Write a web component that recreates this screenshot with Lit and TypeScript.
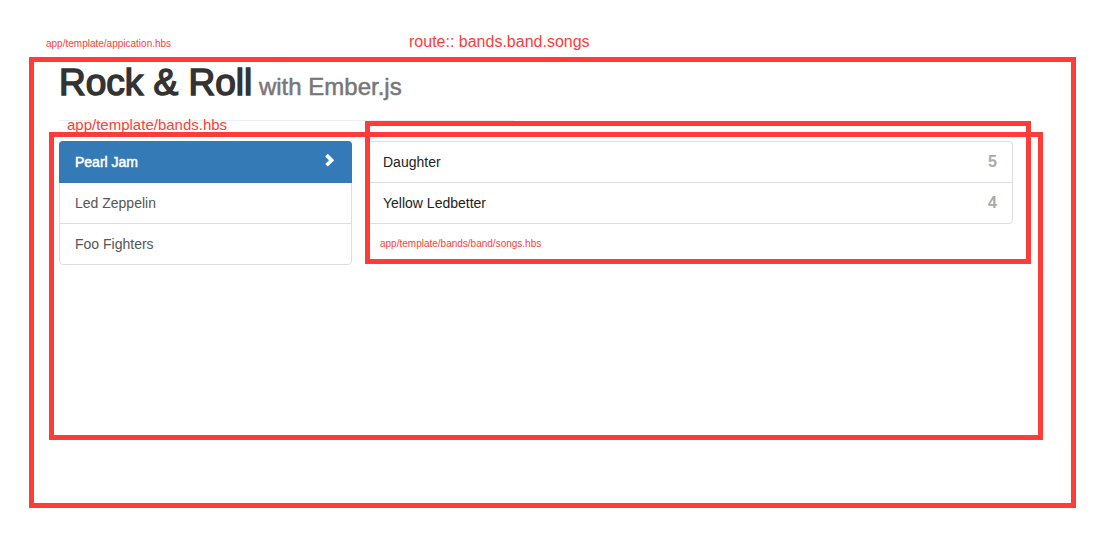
import { LitElement, html, css } from "lit";
import { customElement, property, state } from "lit/decorators.js";

interface Song {
  title: string;
  rating: number;
}

const listStyles = css`
  * {
    box-sizing: border-box;
  }
  .list {
    list-style: none;
    margin: 0;
    padding: 0;
    border: 1px solid #ddd;
    border-radius: 4px;
    background: #fff;
  }
  .item + .item {
    border-top: 1px solid #ddd;
  }
`;

@customElement("band-list")
export class BandList extends LitElement {
  @property({ attribute: false }) bands: string[] = [];
  @state() private active = 0;

  static styles = [
    listStyles,
    css`
      :host {
        display: block;
      }
      .link {
        display: flex;
        justify-content: space-between;
        padding: 10px 15px;
        color: #555;
        text-decoration: none;
      }
      .link.active {
        position: relative;
        margin: -1px;
        padding: 11px 16px;
        background: #337ab7;
        color: #fff;
        -webkit-text-stroke: 0.5px #fff;
      }
      .item:first-child .link {
        border-radius: 4px 4px 0 0;
      }
      .item:last-child .link {
        border-radius: 0 0 4px 4px;
      }
      .chevron {
        width: 14px;
        height: 14px;
        margin-top: 1px;
        fill: #fff;
      }
    `,
  ];

  private select(event: Event, index: number) {
    event.preventDefault();
    this.active = index;
  }

  render() {
    return html`<nav aria-label="Bands">
      <ul class="list">
        ${this.bands.map(
          (band, i) => html`<li class="item">
            <a
              class="link ${i === this.active ? "active" : ""}"
              href="#"
              @click=${(e: Event) => this.select(e, i)}
              ><span>${band}</span>${i === this.active
                ? html`<svg class="chevron" viewBox="0 0 14 14" aria-hidden="true">
                    <path d="M5.8 0.8 12.2 7.2 5.8 13.6 3.2 11 7 7.2 3.2 3.4Z" />
                  </svg>`
                : ""}</a
            >
          </li>`
        )}
      </ul>
    </nav>`;
  }
}

@customElement("song-list")
export class SongList extends LitElement {
  @property({ attribute: false }) songs: Song[] = [];

  static styles = [
    listStyles,
    css`
      :host {
        display: block;
      }
      .item {
        display: flex;
        justify-content: space-between;
        padding: 10px 15px;
        color: #222;
      }
      .rating {
        font-size: 16px;
        font-weight: 700;
        color: #aaa;
      }
    `,
  ];

  render() {
    return html`<ul class="list">
      ${this.songs.map(
        (song) => html`<li class="item">
          <span>${song.title}</span><span class="rating">${song.rating}</span>
        </li>`
      )}
    </ul>`;
  }
}

@customElement("app-root")
export class AppRoot extends LitElement {
  private bands = ["Pearl Jam", "Led Zeppelin", "Foo Fighters"];
  private songs: Song[] = [
    { title: "Daughter", rating: 5 },
    { title: "Yellow Ledbetter", rating: 4 },
  ];

  static styles = css`
    * {
      box-sizing: border-box;
    }
    :host {
      --mark: #ff3c38;
      display: block;
      background: #fff;
      color: #333;
      font: 14px/20px "Liberation Sans", Arial, sans-serif;
    }
    .notes {
      display: grid;
      grid-template-columns: 363px 1fr;
      align-items: baseline;
      height: 57px;
      padding: 32px 0 0 46px;
    }
    .note {
      margin: 0;
      color: var(--mark);
      font-size: 10px;
      line-height: 12px;
    }
    .route {
      font-size: 16px;
      line-height: 20px;
    }
    .application {
      margin: 0 17px 28px 29px;
      padding: 0 28px 63px 15px;
      border: 5px solid var(--mark);
    }
    .title {
      margin: 0 0 0 10px;
      padding-bottom: 16px;
      font-size: 37px;
      font-weight: 400;
      line-height: 42px;
      -webkit-text-stroke: 1.5px #333;
    }
    .subtitle {
      font-size: 24px;
      line-height: 24px;
      color: #777;
      -webkit-text-stroke: 0.5px #777;
    }
    .rule {
      width: 455px;
      max-width: 100%;
      margin: 0 0 0 10px;
      border: 0;
      border-top: 1px solid #eee;
    }
    .bands-note {
      padding: 0 0 3px 18px;
      font-size: 15px;
      line-height: 8px;
    }
    .bands {
      display: grid;
      grid-template-columns: minmax(160px, 293px) 1fr;
      align-items: start;
      gap: 15px;
      min-height: 308px;
      padding: 4px 25px 4px 5px;
      border: 5px solid var(--mark);
    }
    .songs {
      position: relative;
    }
    .songs::after {
      content: "";
      position: absolute;
      inset: -20px -18px -5px -2px;
      border: 5px solid var(--mark);
      pointer-events: none;
    }
    .songs-note {
      padding: 14px 13px 9px;
    }
  `;

  render() {
    return html`
      <header class="notes">
        <p class="note">app/template/appication.hbs</p>
        <p class="note route">route:: bands.band.songs</p>
      </header>
      <main class="application">
        <h1 class="title">Rock &amp; Roll<small class="subtitle"> with Ember.js</small></h1>
        <hr class="rule" />
        <p class="note bands-note">app/template/bands.hbs</p>
        <div class="bands">
          <band-list .bands=${this.bands}></band-list>
          <section class="songs" aria-label="Songs">
            <song-list .songs=${this.songs}></song-list>
            <p class="note songs-note">app/template/bands/band/songs.hbs</p>
          </section>
        </div>
      </main>
    `;
  }
}
